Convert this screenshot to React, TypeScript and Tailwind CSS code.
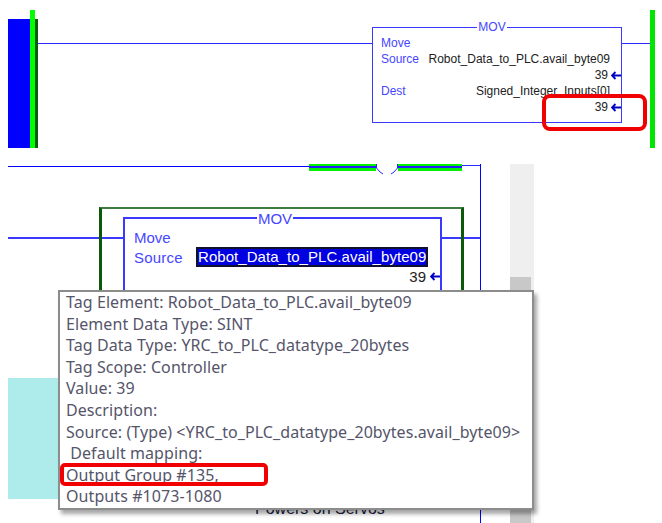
const blue = "text-[#4646ff]"
const dark = "text-[#222222]"

function LeftArrow() {
  return (
    <svg width="10" height="9" viewBox="0 0 10 9" className="shrink-0">
      <path d="M4.5 1 L1 4.5 L4.5 8 M1 4.5 H10" fill="none" stroke="#0000c0" strokeWidth="1.8" />
    </svg>
  )
}

const tooltipLines = [
  "Tag Element: Robot_Data_to_PLC.avail_byte09",
  "Element Data Type: SINT",
  "Tag Data Type: YRC_to_PLC_datatype_20bytes",
  "Tag Scope: Controller",
  "Value: 39",
  "Description:",
  "Source: (Type) <YRC_to_PLC_datatype_20bytes.avail_byte09>",
  "\u00a0Default mapping:",
  "Output Group #135,",
  "Outputs #1073-1080",
]

function TopMov() {
  return (
    <div className="relative mt-[17px] w-[250px] h-[96px] shrink-0 border border-[#3a3aff] text-[12px] leading-[16px] pt-[7px] pl-[8px] pr-0">
      <div className="absolute left-0 w-[238px] -top-[9px] flex justify-center">
        <span className={`bg-white px-[1px] ${blue}`}>MOV</span>
      </div>
      <div className={blue}>Move</div>
      <div className="flex justify-between pr-[11px]">
        <span className={blue}>Source</span>
        <span className={dark}>Robot_Data_to_PLC.avail_byte09</span>
      </div>
      <div className={`flex justify-end items-center gap-[3px] ${dark}`}>
        39
        <LeftArrow />
      </div>
      <div className="flex justify-between pr-[11px]">
        <span className={blue}>Dest</span>
        <span className={dark}>Signed_Integer_Inputs[0]</span>
      </div>
      <div className={`flex justify-end items-center gap-[3px] ${dark}`}>
        39
        <LeftArrow />
      </div>
    </div>
  )
}

function BottomMov() {
  return (
    <div className="relative w-[319px] h-[270px] shrink-0 border-2 border-b-0 border-[#3a3aff] text-[15px] leading-[19px] pt-[9px] pl-[9px]">
      <div className="absolute left-0 w-[300px] -top-[10px] flex justify-center">
        <span className={`bg-white px-[1px] ${blue}`}>MOV</span>
      </div>
      <div className={blue}>Move</div>
      <div className="flex items-center">
        <span className={`w-[62px] tracking-[0.2px] ${blue}`}>Source</span>
        <span className="bg-[#0000e0] text-white border-2 border-[#101030] w-[232px] h-[20px] leading-[16px] tracking-[0.05px] whitespace-nowrap overflow-hidden">
          Robot_Data_to_PLC.avail_byte09
        </span>
      </div>
      <div className={`flex justify-end items-center gap-[4px] ${dark}`}>
        39
        <LeftArrow />
      </div>
    </div>
  )
}

export default function App() {
  return (
    <div className="relative flex flex-col w-[662px] h-[523px] overflow-hidden bg-white pl-[8px] pt-[10px] font-['Liberation_Sans',Arial,sans-serif]">
      {/* top rung */}
      <div className="flex items-start h-[138px] w-[647px] shrink-0">
        <div className="mt-[9px] w-[22px] h-[129px] bg-[#0000ff]" />
        <div className="w-[5px] h-[138px] bg-[#00ff00]" />
        <div className="mt-[9px] w-[3px] h-[129px] bg-[#0b5a0b]" />
        <div className="mt-[33px] flex-1 h-[1px] bg-[#2a2aff]" />
        <TopMov />
        <div className="mt-[33px] w-[28px] h-[1px] bg-[#2a2aff]" />
        <div className="w-[5px] h-[138px] bg-[#00e600]" />
      </div>

      {/* second rung and scrollbar */}
      <div className="flex mt-[16px] flex-1 min-h-0">
        <div className="flex flex-col w-[473px] shrink-0 border-r border-[#0000ff]">
          <div className="flex items-start h-[7px] shrink-0">
            <div className="mt-[2px] w-[301px] h-[1px] bg-[#0000ff]" />
            <div className="w-[67px] h-[7px] bg-[#00f000] pt-[2px]">
              <div className="h-[2px] bg-[#2020ff]" />
            </div>
            <svg width="22" height="12" viewBox="0 0 22 12" className="shrink-0">
              <path d="M0.5 0 V4 L4 8 L7 10 M21.5 0 V4 L18 8 L15 10" fill="none" stroke="#2a2aff" strokeWidth="1" />
            </svg>
            <div className="w-[64px] h-[7px] bg-[#00f000] pt-[2px]">
              <div className="h-[2px] bg-[#2020ff]" />
            </div>
            <div className="mt-[1px] flex-1 h-[1px] bg-[#2a2aff]" />
          </div>

          <div className="flex items-start mt-[36px]">
            <div className="flex flex-col w-[91px] shrink-0">
              <div className="mt-[30px] h-[2px] bg-[#3a3aff]" />
              <div className="mt-[139px] w-[60px] h-[121px] bg-[#aeecec]" />
            </div>
            <div className="flex flex-col w-[365px] shrink-0">
              <div className="flex items-start h-[287px] pt-[8px] border-t-2 border-t-[#3f7a3f] border-x-[3px] border-x-[#0b5a0b]">
                <div className="mt-[20px] w-[21px] h-[2px] bg-[#3a3aff]" />
                <BottomMov />
                <div className="mt-[20px] flex-1 h-[2px] bg-[#3a3aff]" />
              </div>
              <div className="mt-[6px] pl-[156px] text-[16px] leading-[18px] text-[#15203a] whitespace-nowrap">
                Powers on Servos
              </div>
            </div>
            <div className="mt-[30px] flex-1 h-[2px] bg-[#3a3aff]" />
          </div>
        </div>
        <div className="ml-[29px] flex flex-col w-[24px] bg-[#efefef] pt-[113px]">
          <div className="flex-1 w-[21px] bg-[#c8c8c8]" />
        </div>
      </div>

      {/* tooltip */}
      <div className="absolute left-[58px] top-[290px] w-[476px] h-[220px] bg-white border-2 border-[#8c8c8c] shadow-[3px_4px_4px_rgba(0,0,0,0.35)] pl-[6px] font-['Noto_Sans',sans-serif] text-[16px] leading-[21.6px] tracking-[0.08px] text-[#55556a] whitespace-pre">
        {tooltipLines.map((line) => (
          <div key={line}>{line}</div>
        ))}
      </div>

      {/* red callouts */}
      <div className="absolute left-[542px] top-[94px] w-[105px] h-[37px] border-[4px] border-[#f00000] rounded-[8px]" />
      <div className="absolute left-[60px] top-[463px] w-[208px] h-[23px] border-[4px] border-[#f00000] rounded-[5px]" />
    </div>
  )
}
